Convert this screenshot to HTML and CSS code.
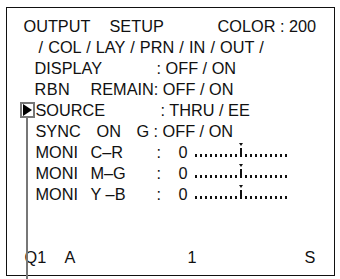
FILE: index.html
```html
<!DOCTYPE html>
<html>
<head>
<meta charset="utf-8">
<link rel="stylesheet" href="styles.css">
</head>
<body>
<div class="screen">
  <div class="row r-title"><span class="w-output">OUTPUT</span><span class="w-setup">SETUP</span><span>COLOR : 200</span></div>
  <div class="row r-tabs"><span>/ COL / LAY / PRN / IN / OUT /</span></div>
  <div class="row r-item"><span class="w-display">DISPLAY</span><span>: OFF / ON</span></div>
  <div class="row r-item"><span class="w-rbn">RBN</span><span>REMAIN: OFF / ON</span></div>
  <div class="row r-item r-ind"><span class="w-source">SOURCE</span><span>: THRU / EE</span></div>
  <div class="row r-item r-ind"><span class="w-sync">SYNC</span><span class="w-on">ON</span><span class="w-g">G</span><span>: OFF / ON</span></div>
  <div class="row r-item r-ind"><span class="w-moni">MONI</span><span class="w-ch">C–R</span><span class="w-colon">:</span><span class="w-zero">0</span><span class="slider"><i></i><i></i><i></i><i></i><i></i><i></i><i></i><i></i><i></i><b class="tick"></b><i></i><i></i><i></i><i></i><i></i><i></i><i></i><i></i><i></i></span></div>
  <div class="row r-item r-ind"><span class="w-moni">MONI</span><span class="w-ch">M–G</span><span class="w-colon">:</span><span class="w-zero">0</span><span class="slider"><i></i><i></i><i></i><i></i><i></i><i></i><i></i><i></i><i></i><b class="tick"></b><i></i><i></i><i></i><i></i><i></i><i></i><i></i><i></i><i></i></span></div>
  <div class="row r-item r-ind"><span class="w-moni">MONI</span><span class="w-ch">Y –B</span><span class="w-colon">:</span><span class="w-zero">0</span><span class="slider"><i></i><i></i><i></i><i></i><i></i><i></i><i></i><i></i><i></i><b class="tick"></b><i></i><i></i><i></i><i></i><i></i><i></i><i></i><i></i><i></i></span></div>
  <div class="row r-foot"><span class="w-q1">Q1</span><span class="w-a">A</span><span class="w-1">1</span><span>S</span></div>
  <div class="cursor"><span class="arrow"></span></div>
  <div class="leader"></div>
</div>
</body>
</html>
```

FILE: styles.css
```css
html, body {
  margin: 0;
  padding: 0;
  background: #fff;
}
body {
  font-family: "Liberation Sans", Arial, sans-serif;
  font-size: 16.3px;
  color: #111;
  overflow: hidden;
  width: 340px;
  height: 279px;
}
.screen {
  position: relative;
  margin: 7px 0 0 6px;
  width: 329px;
  height: 269px;
  box-sizing: border-box;
  border: 1.5px solid #111;
  padding-top: 8px;
}
.row {
  display: flex;
  height: 21px;
  line-height: 21px;
  white-space: pre;
}
.row > span { display: block; flex: none; }

.r-title { padding-left: 16.5px; }
.w-output { width: 86px; }
.w-setup { width: 108px; }

.r-tabs { padding-left: 31.5px; word-spacing: 0.6px; }

.r-item { padding-left: 27.5px; }
.r-ind { padding-left: 28.5px; }
.w-display { width: 122px; }
.w-rbn { width: 56px; letter-spacing: 0.5px; }
.w-source { width: 125px; }
.w-sync { width: 61px; }
.w-on { width: 40px; }
.w-g { width: 17px; }
.w-moni { width: 55px; }
.w-ch { width: 66px; }
.w-colon { width: 22px; }
.w-zero { width: 16px; }

.slider {
  display: flex !important;
  align-items: flex-end;
  height: 15px;
  gap: 3px;
}
.slider i {
  display: block;
  width: 2px;
  height: 3px;
  background: #111;
}
.tick {
  position: relative;
  display: block;
  width: 2px;
  height: 9px;
  background: #111;
}
.tick::before {
  content: "";
  position: absolute;
  left: -1px;
  top: -5px;
  border-left: 2px solid transparent;
  border-right: 2px solid transparent;
  border-top: 3px solid #111;
}

.r-foot { margin-top: 42px; padding-left: 17.5px; }
.w-q1 { width: 40px; }
.w-a { width: 123px; }
.w-1 { width: 117px; }

.cursor {
  position: absolute;
  left: 12.5px;
  top: 93.5px;
  width: 15px;
  height: 16px;
  box-sizing: border-box;
  border: 2px solid #777;
  display: flex;
  align-items: center;
  justify-content: center;
}
.arrow {
  width: 0;
  height: 0;
  border-left: 9px solid #000;
  border-top: 6px solid transparent;
  border-bottom: 6px solid transparent;
  margin-left: 1px;
}
.leader {
  position: absolute;
  left: 18.5px;
  top: 109.5px;
  width: 2px;
  height: 162px;
  background: #777;
}
```
